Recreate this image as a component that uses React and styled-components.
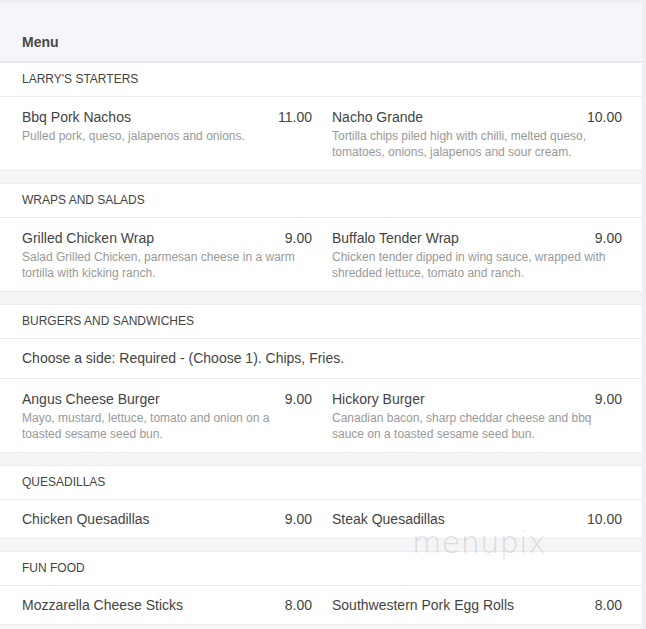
import React from 'react';
import styled, { createGlobalStyle } from 'styled-components';

const GlobalStyle = createGlobalStyle`
  html, body {
    margin: 0;
    padding: 0;
    background: #f0f0f4;
  }
  body {
    font-family: "Liberation Sans", Arial, sans-serif;
  }
`;

const sections = [
  {
    title: "LARRY'S STARTERS",
    items: [
      { name: 'Bbq Pork Nachos', price: '11.00', desc: 'Pulled pork, queso, jalapenos and onions.' },
      { name: 'Nacho Grande', price: '10.00', desc: 'Tortilla chips piled high with chilli, melted queso, tomatoes, onions, jalapenos and sour cream.' },
    ],
  },
  {
    title: 'WRAPS AND SALADS',
    items: [
      { name: 'Grilled Chicken Wrap', price: '9.00', desc: 'Salad Grilled Chicken, parmesan cheese in a warm tortilla with kicking ranch.' },
      { name: 'Buffalo Tender Wrap', price: '9.00', desc: 'Chicken tender dipped in wing sauce, wrapped with shredded lettuce, tomato and ranch.' },
    ],
  },
  {
    title: 'BURGERS AND SANDWICHES',
    note: 'Choose a side: Required - (Choose 1). Chips, Fries.',
    items: [
      { name: 'Angus Cheese Burger', price: '9.00', desc: 'Mayo, mustard, lettuce, tomato and onion on a toasted sesame seed bun.' },
      { name: 'Hickory Burger', price: '9.00', desc: 'Canadian bacon, sharp cheddar cheese and bbq sauce on a toasted sesame seed bun.' },
    ],
  },
  {
    title: 'QUESADILLAS',
    items: [
      { name: 'Chicken Quesadillas', price: '9.00' },
      { name: 'Steak Quesadillas', price: '10.00' },
    ],
  },
  {
    title: 'FUN FOOD',
    items: [
      { name: 'Mozzarella Cheese Sticks', price: '8.00' },
      { name: 'Southwestern Pork Egg Rolls', price: '8.00' },
    ],
  },
];

const Page = styled.div`
  position: relative;
  width: 642px;
  background: #f5f5f7;
  padding-bottom: 12px;
`;

const Header = styled.header`
  height: 59px;
  display: flex;
  align-items: flex-end;
  padding: 0 22px 0;
  background: #f6f6fa;
  border-top: 2px solid #ececf1;
  border-bottom: 1px solid #e4e4ea;
  box-shadow: 0 2px 0 #f2f2f6;
`;

const Title = styled.h1`
  margin: 0 0 9px;
  font-size: 14px;
  line-height: 20px;
  font-weight: bold;
  color: #484848;
`;

const Section = styled.section`
  background: #fff;
  border-top: 1px solid #ececef;
  border-bottom: 1px solid #ececef;
  & + & {
    margin-top: 12px;
  }
`;

const SectionTitle = styled.div`
  padding: 8px 22px 9px;
  font-size: 12px;
  line-height: 16px;
  color: #444;
  border-bottom: 1px solid #ececef;
`;

const Note = styled.div`
  padding: 9px 22px 10px;
  font-size: 14px;
  line-height: 20px;
  color: #444;
  border-bottom: 1px solid #ececef;
`;

const Items = styled.div`
  display: grid;
  grid-template-columns: 290px 290px;
  column-gap: 20px;
  padding: ${(p) => (p.$compact ? '9px 20px 9px 22px' : '10px 20px 10px 22px')};
`;

const Item = styled.div`
  display: flex;
  flex-direction: column;
`;

const ItemTop = styled.div`
  display: flex;
  justify-content: space-between;
  font-size: 14px;
  line-height: 20px;
  color: #444;
`;

const Desc = styled.div`
  margin-top: 1px;
  font-size: 12px;
  line-height: 16px;
  color: #999;
`;

const Watermark = styled.div`
  position: absolute;
  left: 412px;
  top: 525px;
  font-family: "DejaVu Sans", sans-serif;
  font-size: 30px;
  font-weight: 200;
  letter-spacing: 0.5px;
  color: rgba(150, 150, 150, 0.3);
  pointer-events: none;
`;

export default function App() {
  return (
    <>
      <GlobalStyle />
      <Page>
        <Header>
          <Title>Menu</Title>
        </Header>
        {sections.map((s) => (
          <Section key={s.title}>
            <SectionTitle>{s.title}</SectionTitle>
            {s.note && <Note>{s.note}</Note>}
            <Items $compact={!s.items.some((it) => it.desc)}>
              {s.items.map((it) => (
                <Item key={it.name}>
                  <ItemTop>
                    <span>{it.name}</span>
                    <span>{it.price}</span>
                  </ItemTop>
                  {it.desc && <Desc>{it.desc}</Desc>}
                </Item>
              ))}
            </Items>
          </Section>
        ))}
        <Watermark>menupix</Watermark>
      </Page>
    </>
  );
}
